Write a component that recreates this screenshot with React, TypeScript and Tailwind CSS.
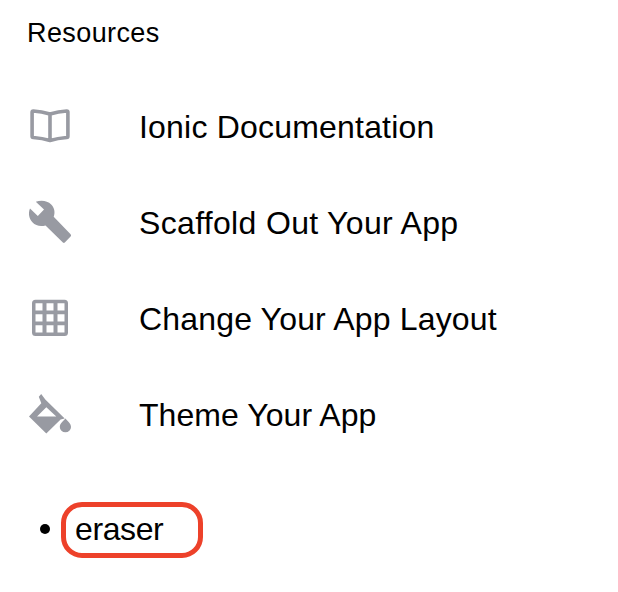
import React from "react";

const iconClass = "h-12 w-12 shrink-0 text-[#989aa2]";

function Book() {
  return (
    <svg viewBox="0 0 48 48" className={iconClass} fill="none" stroke="currentColor" strokeWidth="3.6" strokeLinejoin="round">
      <path d="M25 11.1C19.5 9.5 13.5 8.4 8.3 8Q7.1 8 7.1 9.2V33.3Q7.1 34.4 8.3 34.5C14 35 20 36 25 37.4C30 36 36 35 41.7 34.5Q42.9 34.4 42.9 33.3V9.2Q42.9 8 41.7 8C36.5 8.4 30.5 9.5 25 11.1ZM25 11.1V37.4" />
    </svg>
  );
}

function Wrench() {
  return (
    <svg viewBox="0 0 48 48" className={iconClass} fill="currentColor">
      <path d="M10.8 2.7C16 .8 22.3 1.4 26.2 5.4C29.5 8.9 30.4 13.4 28.7 17.7L45.6 35.3Q46.6 36.5 45.6 37.5L39.8 43.6Q38.9 44.5 37.9 43.6L20.5 26.4C15.8 28 10.7 26.9 7.4 23.3C4 19.6 3 14.5 5 9.6L12.8 17L19 10.5Z" />
    </svg>
  );
}

function Grid() {
  return (
    <svg viewBox="0 0 48 48" className={iconClass} fill="currentColor">
      <path
        fillRule="evenodd"
        d="M10.5 4.7H39.5Q43 4.7 43 8.2V37.5Q43 41 39.5 41H10.5Q7 41 7 37.5V8.2Q7 4.7 10.5 4.7ZM10.5 8.2V15.5H17.5V8.2ZM21.5 8.2V15.5H28.5V8.2ZM32.5 8.2V15.5H39.5V8.2ZM10.5 19.2V26.5H17.5V19.2ZM21.5 19.2V26.5H28.5V19.2ZM32.5 19.2V26.5H39.5V19.2ZM10.5 30.2V37.5H17.5V30.2ZM21.5 30.2V37.5H28.5V30.2ZM32.5 30.2V37.5H39.5V30.2Z"
      />
    </svg>
  );
}

function Bucket() {
  return (
    <svg viewBox="0 0 48 48" className={iconClass} fill="currentColor">
      <path fillRule="evenodd" d="M16.2 3L13.8 5.7L16.3 12.2L4 25.6L21.3 42.4L35.6 28.4L39.7 27.5L20.3 8.4ZM21.3 16.2L12 25.6H31.3Z" />
      <path d="M40.4 27.6C42.7 30 46 33 46 35.9A5.6 5.4 0 0 1 34.8 35.9C34.8 33 38.1 30 40.4 27.6Z" />
    </svg>
  );
}

const resources = [
  { label: "Ionic Documentation", Icon: Book, spacing: "tracking-[0.2px]" },
  { label: "Scaffold Out Your App", Icon: Wrench, spacing: "tracking-[0.33px]" },
  { label: "Change Your App Layout", Icon: Grid, spacing: "tracking-[0.17px]" },
  { label: "Theme Your App", Icon: Bucket, spacing: "tracking-[0.06px]" },
];

export default function App() {
  return (
    <main className="h-[592px] w-[618px] overflow-hidden bg-white font-['Liberation_Sans',Arial,sans-serif] text-black">
      <h1 className="pl-[27px] pt-[15px] text-[27px] leading-9 tracking-[0.4px]">Resources</h1>
      <ul className="pt-7">
        {resources.map(({ label, Icon, spacing }) => (
          <li key={label} className="flex h-24 items-center pl-[25px]">
            <Icon />
            <span className={`pl-[66px] text-[32px] leading-10 ${spacing}`}>{label}</span>
          </li>
        ))}
      </ul>
      <ul className="pl-10 pt-[39px]">
        <li className="flex items-center">
          <span className="mb-0.5 mr-[11px] size-2.5 rounded-full bg-black" />
          <span className="flex h-14 w-[142px] items-center rounded-[21px] border-[5px] border-[#ed412a] pb-0.5 pl-[9px] text-[32px] leading-10 tracking-[-0.4px]">eraser</span>
        </li>
      </ul>
    </main>
  );
}
